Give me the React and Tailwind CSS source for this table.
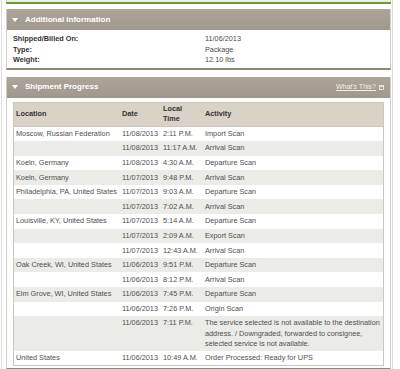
import React from 'react';

const rows = [
  { loc: 'Moscow, Russian Federation', date: '11/08/2013', time: '2:11 P.M.', act: ['Import Scan'] },
  { loc: '', date: '11/08/2013', time: '11:17 A.M.', act: ['Arrival Scan'] },
  { loc: 'Koeln, Germany', date: '11/08/2013', time: '4:30 A.M.', act: ['Departure Scan'] },
  { loc: 'Koeln, Germany', date: '11/07/2013', time: '9:48 P.M.', act: ['Arrival Scan'] },
  { loc: 'Philadelphia, PA, United States', date: '11/07/2013', time: '9:03 A.M.', act: ['Departure Scan'] },
  { loc: '', date: '11/07/2013', time: '7:02 A.M.', act: ['Arrival Scan'] },
  { loc: 'Louisville, KY, United States', date: '11/07/2013', time: '5:14 A.M.', act: ['Departure Scan'] },
  { loc: '', date: '11/07/2013', time: '2:09 A.M.', act: ['Export Scan'] },
  { loc: '', date: '11/07/2013', time: '12:43 A.M.', act: ['Arrival Scan'] },
  { loc: 'Oak Creek, WI, United States', date: '11/06/2013', time: '9:51 P.M.', act: ['Departure Scan'] },
  { loc: '', date: '11/06/2013', time: '8:12 P.M.', act: ['Arrival Scan'] },
  { loc: 'Elm Grove, WI, United States', date: '11/06/2013', time: '7:45 P.M.', act: ['Departure Scan'] },
  { loc: '', date: '11/06/2013', time: '7:26 P.M.', act: ['Origin Scan'] },
  {
    loc: '',
    date: '11/06/2013',
    time: '7:11 P.M.',
    act: [
      'The service selected is not available to the destination',
      'address. / Downgraded, forwarded to consignee,',
      'selected service is not available.',
    ],
  },
  { loc: 'United States', date: '11/06/2013', time: '10:49 A.M.', act: ['Order Processed: Ready for UPS'] },
];

function BoxHeader({ title, right }) {
  return (
    <div className="h-[21px] flex items-center pl-[5px] pr-[6px] bg-gradient-to-b from-[#ada599] to-[#a0988c]">
      <span className="w-0 h-0 border-l-[3px] border-r-[3px] border-t-[4px] border-l-transparent border-r-transparent border-t-white" />
      <span className="ml-[7px] text-[8px] font-bold text-white">{title}</span>
      {right}
    </div>
  );
}

function Box({ title, right, children }) {
  return (
    <div className="border-x border-[#d4d0c9] border-b-2 border-b-[#8f877c] bg-white">
      <BoxHeader title={title} right={right} />
      {children}
    </div>
  );
}

function WhatsThis() {
  return (
    <div className="ml-auto flex items-center gap-[3px] text-[7px] text-[#f2efea]">
      <span className="underline">What's This?</span>
      <svg width="5" height="5" viewBox="0 0 5 5" fill="none">
        <rect x="0.5" y="0.5" width="4" height="4" stroke="#f2efea" strokeWidth="0.8" />
        <line x1="0.5" y1="1.6" x2="4.5" y2="1.6" stroke="#f2efea" strokeWidth="0.8" />
      </svg>
    </div>
  );
}

export default function App() {
  return (
    <div className="w-[400px] h-[369px] overflow-hidden bg-white pl-[1px]" style={{ fontFamily: '"Liberation Sans", Arial, sans-serif' }}>
      <div className="w-[392px] h-full border-x border-[#dcdcdc] pl-[4px] pr-[1px]">
        <div className="h-[2px] bg-[#e9f0dc] border-x border-[#cfd8c0]" />
        <div className="h-[2px] bg-[#6e9a34]" />

        <div className="mt-[5px]">
          <Box title="Additional Information">
            <div className="pt-[4px] pb-[2px] text-[7.3px] leading-[10.5px] text-[#333]">
              {[
                ['Shipped/Billed On:', '11/06/2013'],
                ['Type:', 'Package'],
                ['Weight:', '12.10 lbs'],
              ].map(([k, v]) => (
                <div key={k} className="flex">
                  <span className="w-[198px] pl-[6px] font-bold">{k}</span>
                  <span className="text-[#4d4d4d]">{v}</span>
                </div>
              ))}
            </div>
          </Box>
        </div>

        <div className="mt-[7px]">
          <Box title="Shipment Progress" right={<WhatsThis />}>
            <div className="px-[6px] pt-[4px] pb-[2px]">
              <div className="border border-[#cbc7bf] text-[7.3px]">
                <div className="grid grid-cols-[105px_41px_42px_1fr] h-[24px] items-center bg-[#d9d2c7] font-bold text-[#333] leading-[10px] border-b border-[#cbc7bf]">
                  <div className="pl-[2px]">Location</div>
                  <div className="pl-[3px]">Date</div>
                  <div className="pl-[3px]">
                    Local
                    <br />
                    Time
                  </div>
                  <div className="pl-[3px]">Activity</div>
                </div>
                {rows.map((r, i) => (
                  <div
                    key={i}
                    className={`grid grid-cols-[105px_41px_42px_1fr] text-[#505050] ${r.act.length > 1 ? 'h-[34.5px] pt-[2px] leading-[10.3px]' : 'h-[14.6px] items-center leading-[10px]'} ${i % 2 ? 'bg-[#ebebe7]' : 'bg-white'}`}
                  >
                    <div className="pl-[2px] whitespace-nowrap">{r.loc}</div>
                    <div className="pl-[3px] whitespace-nowrap">{r.date}</div>
                    <div className="pl-[3px] whitespace-nowrap">{r.time}</div>
                    <div className="pl-[3px] whitespace-nowrap">
                      {r.act.map((a, j) => (
                        <div key={j}>{a}</div>
                      ))}
                    </div>
                  </div>
                ))}
              </div>
            </div>
          </Box>
        </div>
      </div>
    </div>
  );
}
